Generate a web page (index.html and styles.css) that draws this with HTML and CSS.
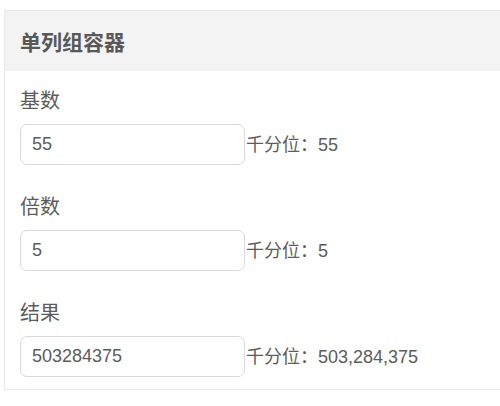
FILE: index.html
```html
<!DOCTYPE html>
<html lang="zh">
<head>
<meta charset="utf-8">
<link rel="stylesheet" href="styles.css">
</head>
<body>
<div class="card">
  <div class="card-header">单列组容器</div>
  <div class="card-body">
    <div class="field">
      <div class="label">基数</div>
      <div class="row">
        <input class="input" type="text" value="55">
        <span class="suffix">千分位：55</span>
      </div>
    </div>
    <div class="field">
      <div class="label">倍数</div>
      <div class="row">
        <input class="input" type="text" value="5">
        <span class="suffix">千分位：5</span>
      </div>
    </div>
    <div class="field">
      <div class="label">结果</div>
      <div class="row">
        <input class="input" type="text" value="503284375">
        <span class="suffix">千分位：503,284,375</span>
      </div>
    </div>
  </div>
</div>
</body>
</html>
```
FILE: styles.css
```css
html, body {
  margin: 0;
  padding: 0;
  overflow: hidden;
  background: #fff;
}
body {
  padding: 10px 0 0 4px;
  font-family: "Liberation Sans", "Noto Sans CJK SC", sans-serif;
  color: #5c5c5c;
}
.card {
  width: 500px;
  border: 1px solid #e8e8e8;
  box-sizing: border-box;
}
.card-header {
  height: 60px;
  background: #f3f3f3;
  display: flex;
  align-items: center;
  padding-left: 15px;
  font-size: 21px;
  font-weight: bold;
  color: #585858;
}
.card-body {
  padding: 16px 15px 12px;
}
.field + .field {
  margin-top: 28px;
}
.label {
  font-size: 20px;
  line-height: 28px;
  color: #5c5c5c;
  margin-bottom: 9px;
}
.row {
  display: flex;
  align-items: center;
}
.input {
  width: 225px;
  height: 41px;
  box-sizing: border-box;
  border: 1px solid #d9d9d9;
  border-radius: 7px;
  padding: 0 11px;
  font-family: "Liberation Sans", "Noto Sans CJK SC", sans-serif;
  font-size: 18px;
  color: #5c5c5c;
  outline: none;
  margin: 0;
}
.suffix {
  font-size: 18px;
  line-height: 24px;
  color: #5c5c5c;
  margin-left: 1px;
}
```
